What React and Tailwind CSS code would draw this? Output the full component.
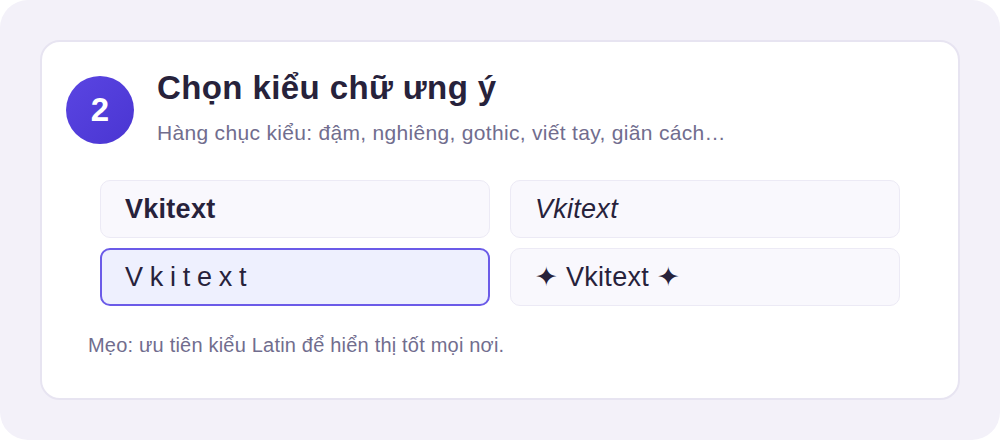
import React, { useState } from "react";

const styles = [
  { id: "bold", label: "Vkitext", className: "font-bold" },
  { id: "italic", label: "Vkitext", className: "italic" },
  { id: "spaced", label: "Vkitext", className: "tracking-[0.25em]" },
  { id: "sparkle", label: "✦ Vkitext ✦", className: "" },
];

const FontStep = () => {
  const [selected, setSelected] = useState("spaced");

  return (
    <div className="w-[1000px] h-[440px] bg-white font-['Liberation_Sans',Arial,sans-serif]">
      <div className="w-full h-full rounded-[28px] bg-[#f3f1f9] p-10">
        <div className="h-full rounded-[20px] border-2 border-[#e7e4f1] bg-white pl-[24px] pr-[58px] pt-[28px]">
          <div className="flex items-start gap-[23px]">
            <div className="mt-[6px] w-[68px] h-[68px] shrink-0 rounded-full bg-gradient-to-br from-[#5a45e2] to-[#4a35d2] flex items-center justify-center text-white text-[33px] font-bold">
              2
            </div>
            <div>
              <h1 className="text-[33px] leading-[36px] tracking-[0.012em] font-bold text-[#27223b]">
                Chọn kiểu chữ ưng ý
              </h1>
              <p className="mt-[15px] text-[21px] leading-6 tracking-[0.015em] text-[#716d8e]">
                Hàng chục kiểu: đậm, nghiêng, gothic, viết tay, giãn cách…
              </p>
            </div>
          </div>

          <div className="ml-[34px] mt-[35px] grid grid-cols-2 gap-x-5 gap-y-[10px]">
            {styles.map((s) => {
              const active = s.id === selected;
              return (
                <button
                  key={s.id}
                  onClick={() => setSelected(s.id)}
                  className={
                    "h-[58px] rounded-[10px] text-left text-[27px] tracking-[0.01em] text-[#27223b] " +
                    (active
                      ? "border-2 border-[#6b5be8] bg-[#eef0fe] pl-[23px]"
                      : "border border-[#eceaf5] bg-[#f9f8fd] pl-[24px]")
                  }
                >
                  <span className={s.className}>{s.label}</span>
                </button>
              );
            })}
          </div>

          <p className="ml-[22px] mt-[25px] text-[20px] leading-7 tracking-[0.01em] text-[#716d8e]">
            Mẹo: ưu tiên kiểu Latin để hiển thị tốt mọi nơi.
          </p>
        </div>
      </div>
    </div>
  );
};

export default FontStep;
